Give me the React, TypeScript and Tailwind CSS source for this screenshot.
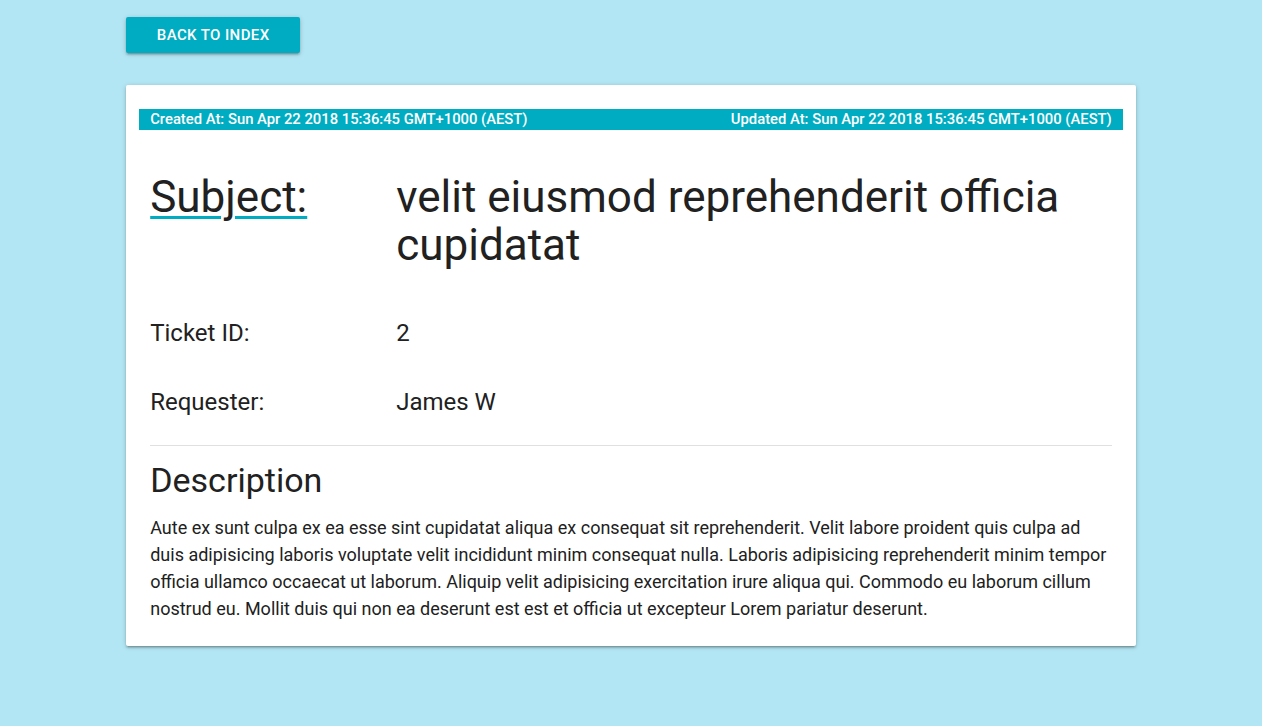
const ticket = {
  id: 2,
  subject: 'velit eiusmod reprehenderit officia cupidatat',
  requester: 'James W',
  createdAt: 'Sun Apr 22 2018 15:36:45 GMT+1000 (AEST)',
  updatedAt: 'Sun Apr 22 2018 15:36:45 GMT+1000 (AEST)',
  description:
    'Aute ex sunt culpa ex ea esse sint cupidatat aliqua ex consequat sit reprehenderit. Velit labore proident quis culpa ad duis adipisicing laboris voluptate velit incididunt minim consequat nulla. Laboris adipisicing reprehenderit minim tempor officia ullamco occaecat ut laborum. Aliquip velit adipisicing exercitation irure aliqua qui. Commodo eu laborum cillum nostrud eu. Mollit duis qui non ea deserunt est est et officia ut excepteur Lorem pariatur deserunt.',
};

function Row({ label, value }: { label: string; value: string | number }) {
  return (
    <div className="flex text-[24px] leading-[32.5px]">
      <div className="w-[246px] shrink-0">{label}</div>
      <div className="flex-1">{value}</div>
    </div>
  );
}

export default function App() {
  return (
    <div
      className="min-h-[726px] bg-[#b3e6f4] pt-[17px] pb-10 text-[#212121]"
      style={{ fontFamily: 'Roboto, "Liberation Sans", sans-serif' }}
    >
      <div className="w-4/5 mx-auto">
        <button className="w-[174px] h-[36px] flex items-center justify-center rounded-[2px] bg-[#00acc1] text-white text-[15px] font-medium tracking-[0.4px] uppercase shadow-[0px_1px_5px_0px_rgba(0,0,0,0.2),0px_2px_2px_0px_rgba(0,0,0,0.14),0px_3px_1px_-2px_rgba(0,0,0,0.12)]">
          Back to index
        </button>

        <div className="mt-[32px] bg-white rounded-[2px] px-[13px] pt-[24px] pb-[24px] shadow-[0px_1px_5px_0px_rgba(0,0,0,0.2),0px_2px_2px_0px_rgba(0,0,0,0.14),0px_3px_1px_-2px_rgba(0,0,0,0.12)]">
          <div className="flex justify-between bg-[#00acc1] px-[11px] text-white text-[14.8px] font-medium leading-[21px]">
            <span>Created At: {ticket.createdAt}</span>
            <span>Updated At: {ticket.updatedAt}</span>
          </div>

          <div className="px-[11px]">
            <div className="flex mt-[43px] text-[44px] leading-[48px]">
              <div className="w-[246px] shrink-0">
                <span className="underline decoration-[#00acc1] decoration-[3px] underline-offset-[4px]">Subject:</span>
              </div>
              <div className="flex-1">{ticket.subject}</div>
            </div>

            <div className="mt-[48px]">
              <Row label="Ticket ID:" value={ticket.id} />
            </div>
            <div className="mt-[36px]">
              <Row label="Requester:" value={ticket.requester} />
            </div>

            <hr className="mt-[27px] border-0 border-t border-[#e0e0e0]" />

            <h2 className="mt-[14px] text-[34px] leading-[40.5px] font-normal">Description</h2>
            <p className="mt-[13px] text-[18px] leading-[27px]">{ticket.description}</p>
          </div>
        </div>
      </div>
    </div>
  );
}
